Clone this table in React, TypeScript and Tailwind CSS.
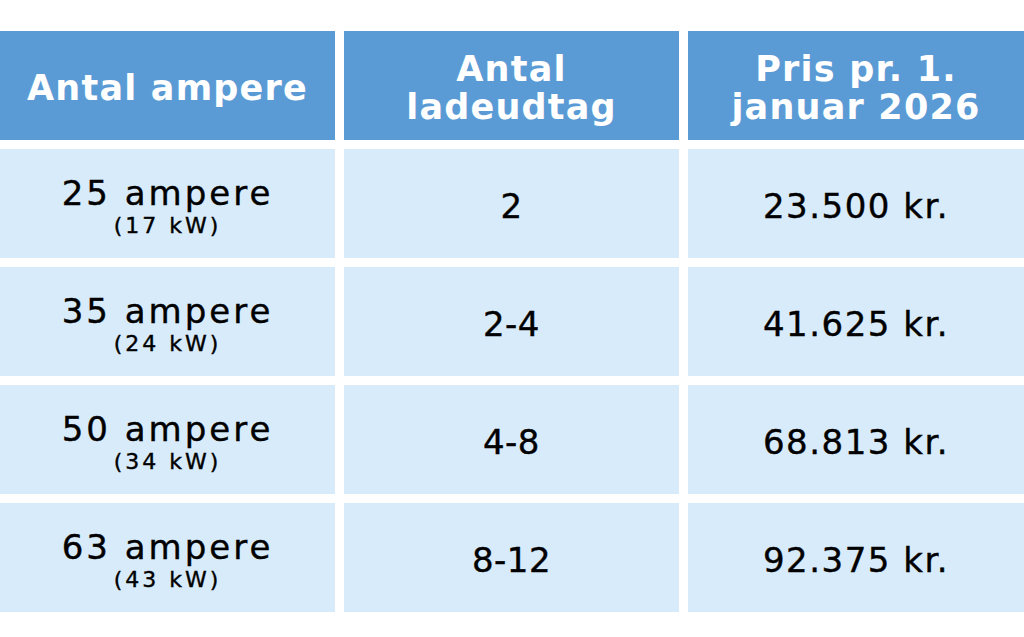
const rows = [
  { amp: '25 ampere', kw: '(17 kW)', outlets: '2', price: '23.500 kr.' },
  { amp: '35 ampere', kw: '(24 kW)', outlets: '2-4', price: '41.625 kr.' },
  { amp: '50 ampere', kw: '(34 kW)', outlets: '4-8', price: '68.813 kr.' },
  { amp: '63 ampere', kw: '(43 kW)', outlets: '8-12', price: '92.375 kr.' },
]

const HeadCell = ({ lines }: { lines: string[] }) => (
  <div className="flex h-[109px] flex-col items-center justify-center bg-[#5b9bd5] pt-[4px] text-center text-[35px] leading-[38px] font-bold tracking-[1.2px] text-white">
    {lines.map((l) => (
      <span key={l}>{l}</span>
    ))}
  </div>
)

const BodyCell = ({ children }: { children: React.ReactNode }) => (
  <div className="flex h-[109px] flex-col items-center justify-center bg-[#d8ebfa] pt-[4px] text-center text-black [-webkit-text-stroke:0.4px_black]">
    {children}
  </div>
)

export default function App() {
  return (
    <div className="min-h-[637px] w-[1024px] bg-white pt-[31px] font-['DejaVu_Sans',sans-serif]">
      <div className="grid grid-cols-[335px_335px_1fr] gap-[9px]">
        <HeadCell lines={['Antal ampere']} />
        <HeadCell lines={['Antal', 'ladeudtag']} />
        <HeadCell lines={['Pris pr. 1.', 'januar 2026']} />
        {rows.map((r) => (
          <div key={r.amp} className="contents">
            <BodyCell>
              <span className="text-[34px] leading-[36px] tracking-[3px]">{r.amp}</span>
              <span className="mt-[3px] text-[22px] leading-[23px] tracking-[3px]">{r.kw}</span>
            </BodyCell>
            <BodyCell>
              <span className="text-[34px] leading-[36px] tracking-[0.5px]">{r.outlets}</span>
            </BodyCell>
            <BodyCell>
              <span className="text-[34px] leading-[36px] tracking-[1.5px]">{r.price}</span>
            </BodyCell>
          </div>
        ))}
      </div>
    </div>
  )
}
